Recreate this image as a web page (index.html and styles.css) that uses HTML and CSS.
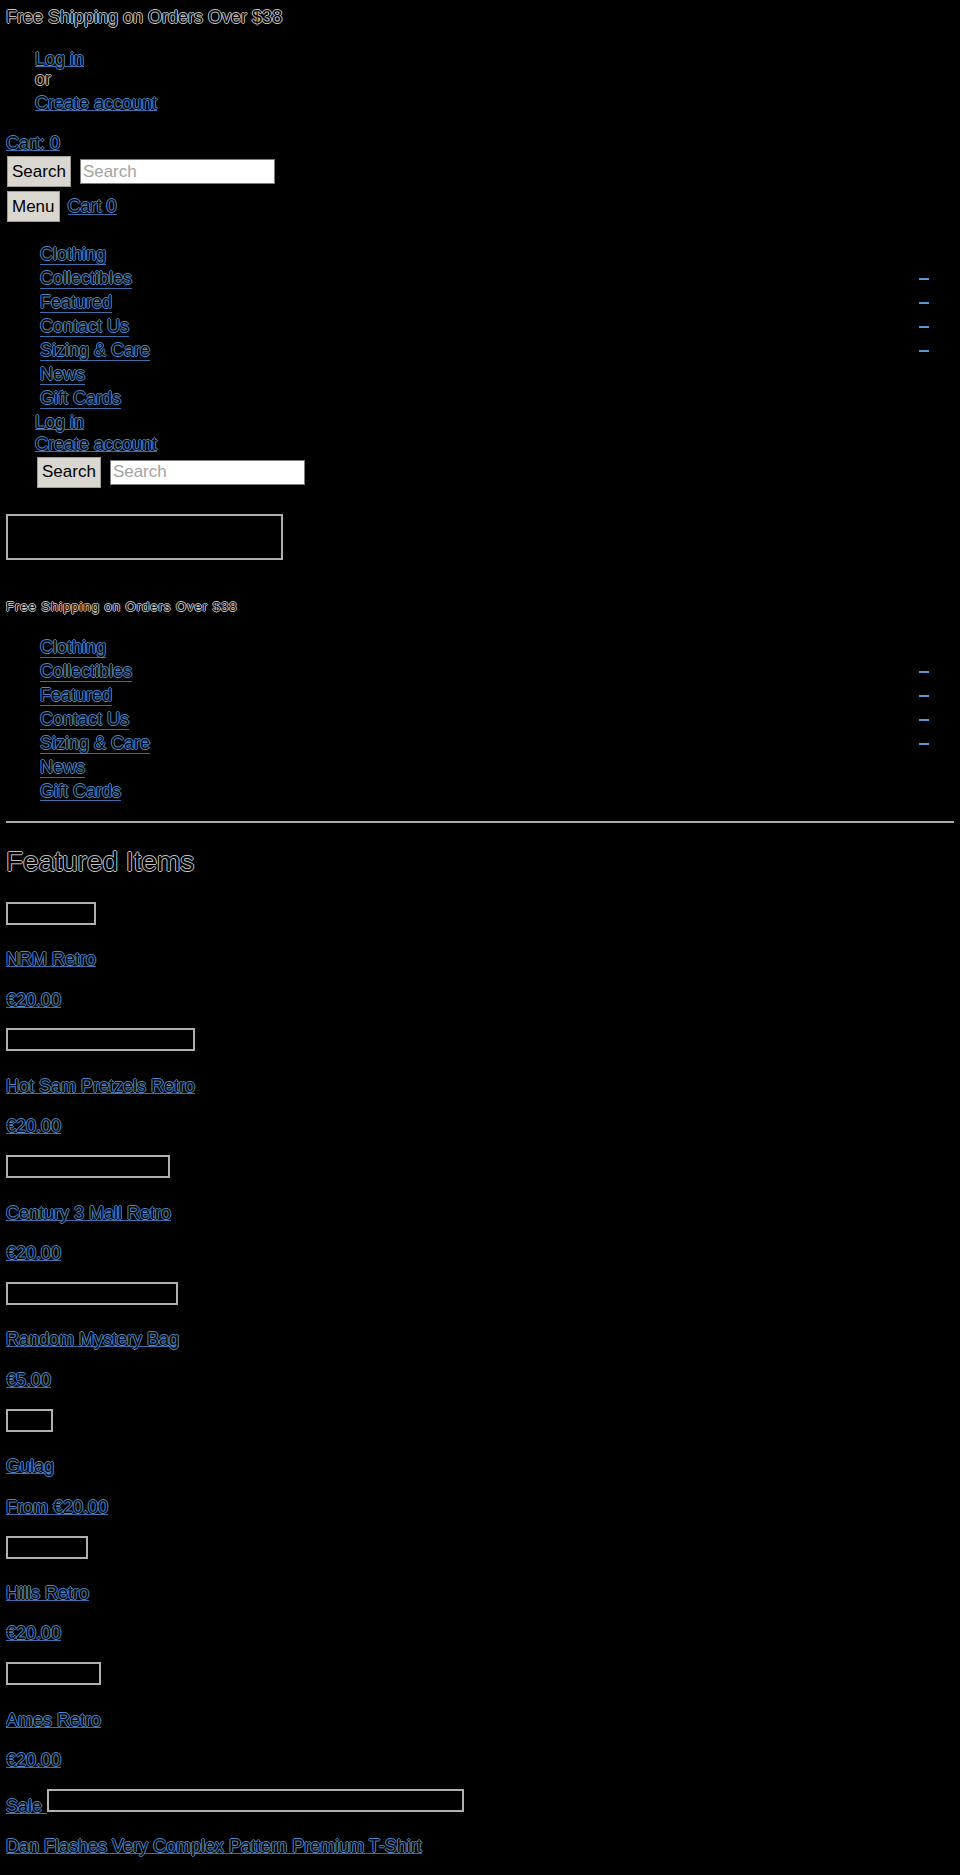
FILE: index.html
```html
<!DOCTYPE html>
<html lang="en">

<head>
    <meta charset="UTF-8">
    <meta name="viewport" content="width=device-width, initial-scale=1.0">
    <title>Featured Items</title>
    <link rel="stylesheet" href="styles.css">
</head>

<body>
    <div class="announcement">Free Shipping on Orders Over $38</div>

    <ul class="account">
        <li><a href="#" class="link">Log in</a></li>
        <li class="account__or">or</li>
        <li><a href="#" class="link">Create account</a></li>
    </ul>

    <div class="cart-line"><a href="#" class="link">Cart: 0</a></div>

    <form class="search" action="#">
        <button type="submit" class="btn">Search</button>
        <input type="search" class="search__input" placeholder="Search">
    </form>

    <div class="toolbar">
        <button type="button" class="btn">Menu</button>
        <a href="#" class="link">Cart 0</a>
    </div>

    <!-- mobile drawer -->
    <ul class="nav nav--drawer">
        <li class="nav__item"><a href="#" class="link">Clothing</a></li>
        <li class="nav__item"><a href="#" class="link">Collectibles</a><span class="nav__toggle"></span></li>
        <li class="nav__item"><a href="#" class="link">Featured</a><span class="nav__toggle"></span></li>
        <li class="nav__item"><a href="#" class="link">Contact Us</a><span class="nav__toggle"></span></li>
        <li class="nav__item"><a href="#" class="link">Sizing &amp; Care</a><span class="nav__toggle"></span></li>
        <li class="nav__item"><a href="#" class="link">News</a></li>
        <li class="nav__item"><a href="#" class="link">Gift Cards</a></li>
        <li class="nav__account"><a href="#" class="link">Log in</a></li>
        <li class="nav__account"><a href="#" class="link">Create account</a></li>
        <li>
            <form class="search" action="#">
                <button type="submit" class="btn">Search</button>
                <input type="search" class="search__input" placeholder="Search">
            </form>
        </li>
    </ul>

    <div class="logo"></div>

    <p class="announcement announcement--small">Free Shipping on Orders Over $38</p>

    <ul class="nav nav--site">
        <li class="nav__item"><a href="#" class="link">Clothing</a></li>
        <li class="nav__item"><a href="#" class="link">Collectibles</a><span class="nav__toggle"></span></li>
        <li class="nav__item"><a href="#" class="link">Featured</a><span class="nav__toggle"></span></li>
        <li class="nav__item"><a href="#" class="link">Contact Us</a><span class="nav__toggle"></span></li>
        <li class="nav__item"><a href="#" class="link">Sizing &amp; Care</a><span class="nav__toggle"></span></li>
        <li class="nav__item"><a href="#" class="link">News</a></li>
        <li class="nav__item"><a href="#" class="link">Gift Cards</a></li>
    </ul>

    <hr class="rule">

    <h2 class="section-title">Featured Items</h2>

    <ul class="products">
        <li class="product">
            <div class="product__media"><a href="#" class="product__thumb"></a></div>
            <p class="product__title"><a href="#" class="link">NRM Retro</a></p>
            <p class="product__price"><a href="#" class="link">€20.00</a></p>
        </li>
        <li class="product">
            <div class="product__media"><a href="#" class="product__thumb"></a></div>
            <p class="product__title"><a href="#" class="link">Hot Sam Pretzels Retro</a></p>
            <p class="product__price"><a href="#" class="link">€20.00</a></p>
        </li>
        <li class="product">
            <div class="product__media"><a href="#" class="product__thumb"></a></div>
            <p class="product__title"><a href="#" class="link">Century 3 Mall Retro</a></p>
            <p class="product__price"><a href="#" class="link">€20.00</a></p>
        </li>
        <li class="product">
            <div class="product__media"><a href="#" class="product__thumb"></a></div>
            <p class="product__title"><a href="#" class="link">Random Mystery Bag</a></p>
            <p class="product__price"><a href="#" class="link">€5.00</a></p>
        </li>
        <li class="product">
            <div class="product__media"><a href="#" class="product__thumb"></a></div>
            <p class="product__title"><a href="#" class="link">Gulag</a></p>
            <p class="product__price"><a href="#" class="link">From €20.00</a></p>
        </li>
        <li class="product">
            <div class="product__media"><a href="#" class="product__thumb"></a></div>
            <p class="product__title"><a href="#" class="link">Hills Retro</a></p>
            <p class="product__price"><a href="#" class="link">€20.00</a></p>
        </li>
        <li class="product">
            <div class="product__media"><a href="#" class="product__thumb"></a></div>
            <p class="product__title"><a href="#" class="link">Ames Retro</a></p>
            <p class="product__price"><a href="#" class="link">€20.00</a></p>
        </li>
        <li class="product">
            <div class="product__media"><a href="#" class="link">Sale </a><a href="#" class="product__thumb"></a></div>
            <p class="product__title"><a href="#" class="link">Dan Flashes Very Complex Pattern Premium T-Shirt</a></p>
            <p class="product__price"><a href="#" class="link">€30.00</a></p>
        </li>
    </ul>
</body>

</html>
```

FILE: styles.css
```css
:root {
    --text: #c2c2c2;
    --link: #4a89cc;
    --underline: #3a6fab;
    --frame: #b0b0b0;
}

body {
    margin: 6px;
    background: #000;
    color: #000;
    font: 18px/20.7px "Liberation Sans", Arial, sans-serif;
    /* hollow lettering: dark fill with a 1px halo */
    text-shadow: -1px 0 var(--text), 1px 0 var(--text), 0 -1px var(--text), 0 1px var(--text);
}

ul {
    list-style: none;
    margin: 0;
    padding: 0;
}

p {
    margin: 0;
}

.link {
    color: #000;
    text-decoration: none;
    text-shadow: -1px 0 var(--link), 1px 0 var(--link), 0 -1px var(--link), 0 1px var(--link);
    background: linear-gradient(var(--underline), var(--underline)) 0 calc(100% - 2px) / 100% 1px no-repeat;
}

/* top bar */

.announcement {
    margin: 0;
    padding-top: 1px;
}

.announcement--small {
    margin-top: 37.8px;
    font-size: 13px;
    line-height: 15px;
    letter-spacing: 1px;
    --text: #8c8c8c;
}

.account {
    margin: 21px 0 19.4px;
    padding-left: 29px;
}

.account__or {
    margin-bottom: 2.5px;
}

.btn {
    height: 31px;
    padding: 0 4px;
    border: 1px solid #a09d97;
    background: #dad7d1;
    color: #000;
    font: 17px "Liberation Sans", Arial, sans-serif;
    text-shadow: none;
}

.search {
    display: flex;
    align-items: center;
    gap: 9px;
    margin: 2.8px 0 0 1px;
}

.search__input {
    width: 195px;
    height: 25px;
    padding: 0 2px;
    border: 1px solid #7d7d7d;
    background: #fff;
    font: 17px "Liberation Sans", Arial, sans-serif;
    text-shadow: none;
}

.search__input::placeholder {
    color: #a3a3a3;
}

.toolbar {
    display: flex;
    align-items: center;
    gap: 8px;
    margin: 4px 0 0 1px;
}

/* navigation */

.nav {
    margin-top: 21px;
    padding-left: 29px;
}

.nav--site {
    margin-top: 22.2px;
}

.nav__item {
    display: flex;
    justify-content: space-between;
    align-items: center;
    padding-left: 5px;
    line-height: 23.9px;
}

.nav__toggle {
    width: 10px;
    height: 2px;
    margin-right: 25px;
    background: #5a97da;
}

.nav__account {
    line-height: 22.4px;
}

.nav .search {
    margin: 1.5px 0 0 2px;
}

.logo {
    box-sizing: border-box;
    width: 277px;
    height: 46.6px;
    margin-top: 25.7px;
    border: 2px solid var(--frame);
}

.rule {
    height: 2px;
    margin: 18px 0 0;
    border: 0;
    background: #ababab;
}

.section-title {
    margin: 22.5px 0 0;
    font-size: 28px;
    font-weight: normal;
    line-height: 32.2px;
}

/* product grid */

.products {
    margin-top: 23.5px;
}

.product__thumb {
    box-sizing: border-box;
    display: inline-block;
    height: 23px;
    border: 2px solid var(--frame);
    vertical-align: baseline;
}

.product__title {
    margin-top: 19.6px;
}

.product__price {
    margin: 19.9px 0 18.2px;
}

.product:nth-child(1) .product__thumb { width: 90px; }
.product:nth-child(2) .product__thumb { width: 189px; }
.product:nth-child(3) .product__thumb { width: 164px; }
.product:nth-child(4) .product__thumb { width: 172px; }
.product:nth-child(5) .product__thumb { width: 47px; }
.product:nth-child(6) .product__thumb { width: 82px; }
.product:nth-child(7) .product__thumb { width: 95px; }
.product:nth-child(8) .product__thumb { width: 417px; }
```
